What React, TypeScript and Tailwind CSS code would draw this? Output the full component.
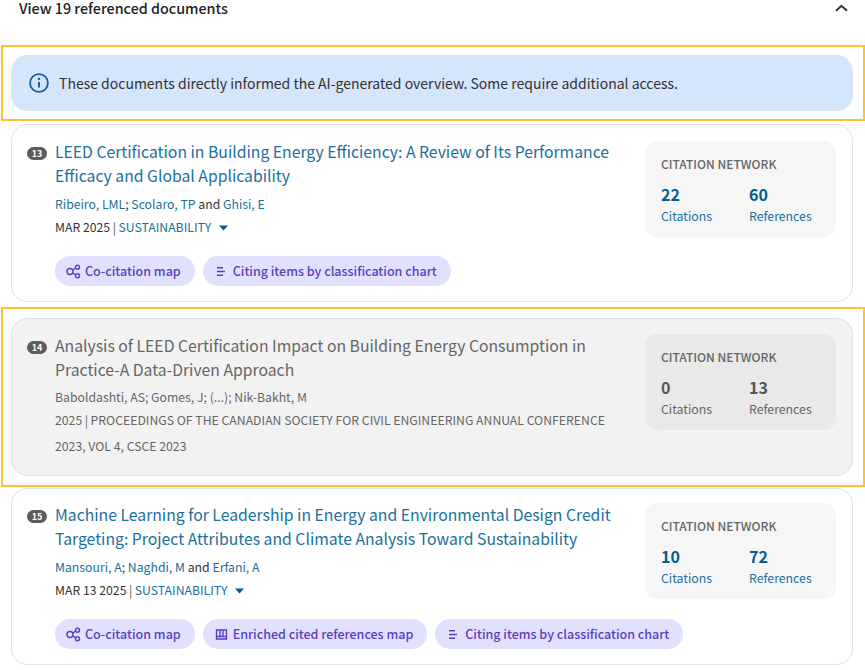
import React from "react";

const font = { fontFamily: '"Noto Sans CJK SC", "Noto Sans", sans-serif' };

function CoIcon() {
  return (
    <svg width="15" height="15" viewBox="0 0 15 15" fill="none" stroke="#5a3fc0" strokeWidth="1.4">
      <circle cx="4" cy="7.5" r="3" />
      <circle cx="11.5" cy="3.2" r="2" />
      <circle cx="11.5" cy="11.8" r="2" />
      <path d="M6.6 6 9.8 4.2M6.6 9 9.8 10.8" />
    </svg>
  );
}
function BarsIcon() {
  return (
    <svg width="15" height="15" viewBox="0 0 15 15" fill="none" stroke="#5a3fc0" strokeWidth="1.6">
      <path d="M3 3.8h6M3 7.5h8M3 11.2h6" />
    </svg>
  );
}
function BookIcon() {
  return (
    <svg width="15" height="15" viewBox="0 0 15 15" fill="none" stroke="#5a3fc0" strokeWidth="1.4">
      <path d="M2.5 3h10v9h-10zM2.5 9.5h10M6 3v6.5M9 3v6.5" />
    </svg>
  );
}

function Chip({ icon, label }: { icon: React.ReactNode; label: string }) {
  return (
    <span className="flex h-[30px] shrink-0 items-center gap-[4px] rounded-full bg-[#e1e1fd] pr-[14px] pl-[11px] text-[12.5px] font-medium whitespace-nowrap text-[#5a3fc0]">
      {icon}
      {label}
    </span>
  );
}

function Stat({ value, label, muted, last }: { value: string; label: string; muted?: boolean; last?: boolean }) {
  return (
    <div className={`flex flex-col ${last ? "" : "w-[88px]"}`}>
      <span className={`text-[16px] leading-[22px] font-bold ${muted ? "text-[#555]" : "text-[#005f8e]"}`}>{value}</span>
      <span className={`mt-px text-[12.3px] leading-[20px] ${muted ? "text-[#666]" : "text-[#1a6f9c]"}`}>{label}</span>
    </div>
  );
}

function Network({ citations, references, muted, className }: { citations: string; references: string; muted?: boolean; className: string }) {
  return (
    <div className={`flex h-[96px] w-[191px] shrink-0 flex-col rounded-[12px] pt-[14px] pl-[16px] ${muted ? "bg-[#e9e9e9]" : "bg-[#f6f6f6]"} ${className}`}>
      <span className="text-[12px] leading-[18px] font-medium text-[#666]">CITATION NETWORK</span>
      <div className="mt-[10px] flex">
        <Stat value={citations} label="Citations" muted={muted} />
        <Stat value={references} label="References" muted={muted} last />
      </div>
    </div>
  );
}

function Badge({ n }: { n: string }) {
  return (
    <span className="mt-[7px] flex h-[13px] w-[20px] shrink-0 items-center justify-center rounded-full bg-[#5c5c5c] text-[9px] leading-none font-bold text-white">
      {n}
    </span>
  );
}

function Caret() {
  return (
    <svg width="9" height="6" viewBox="0 0 9 6" className="ml-[8px] inline-block align-[1px]">
      <path d="M0 0.5h9L4.5 5.5z" fill="#005f8e" />
    </svg>
  );
}

function Link({ children }: { children: React.ReactNode }) {
  return <span className="text-[#1a6f9c]">{children}</span>;
}

function Sep({ muted }: { muted?: boolean }) {
  return <span className={`mx-[2.5px] ${muted ? "text-[#666]" : "text-[#555]"}`}>|</span>;
}

export default function App() {
  return (
    <div className="h-[670px] w-[865px] overflow-hidden bg-white text-[#333]" style={font}>
      <div className="flex h-[45px] items-start justify-between pr-[17px] pl-[19px]">
        <span className="-mt-[4px] text-[14.3px] leading-[24px] font-medium text-[#222]">View 19 referenced documents</span>
        <svg width="13" height="8" viewBox="0 0 13 8" fill="none" stroke="#333" strokeWidth="2" className="mt-[4px]">
          <path d="M1 6.8 6.5 1.8 12 6.8" />
        </svg>
      </div>

      <div className="ml-px h-[76px] w-[864px] border-2 border-[#fdc32d] pt-[8px] pr-[10px] pl-[8px]">
        <div className="flex h-[56px] items-center gap-[10px] rounded-[16px] border border-[#dbe6f5] bg-[#d4e5fc] pl-[17px]">
          <svg width="20" height="20" viewBox="0 0 20 20" fill="none" stroke="#1a5ca6" strokeWidth="1.8">
            <circle cx="10" cy="10" r="8.9" />
            <path d="M10 9v5.5" strokeWidth="2" />
            <circle cx="10" cy="6" r="1.2" fill="#1a5ca6" stroke="none" />
          </svg>
          <span className="text-[14px] leading-[22px] text-[#333]">These documents directly informed the AI-generated overview. Some require additional access.</span>
        </div>
      </div>

      <div className="mt-[3px] ml-[11px] flex h-[178px] w-[842px] justify-between rounded-[16px] border border-[#e3e3e3] pt-[15px] pr-[16px] pl-[15px]">
        <div className="flex min-w-0 flex-1 flex-col">
          <div className="flex gap-[8px]">
            <Badge n="13" />
            <div className="flex flex-col">
              <div className="w-[565px] text-[15.75px] leading-[23.5px] text-[#1a6f9c]">LEED Certification in Building Energy Efficiency: A Review of Its Performance Efficacy and Global Applicability</div>
              <div className="mt-[6px] text-[12.25px] leading-[23px] text-[#333]"><Link>Ribeiro, LML</Link>; <Link>Scolaro, TP</Link> and <Link>Ghisi, E</Link></div>
              <div className="text-[12.25px] leading-[23px] text-[#333]">MAR 2025<Sep /><Link>SUSTAINABILITY</Link><Caret /></div>
            </div>
          </div>
          <div className="mt-[17px] ml-[28px] flex gap-[8px]">
            <Chip icon={<CoIcon />} label="Co-citation map" />
            <Chip icon={<BarsIcon />} label="Citing items by classification chart" />
          </div>
        </div>
        <Network citations="22" references="60" className="mt-px" />
      </div>

      <div className="mt-[5px] ml-px h-[180px] w-[864px] border-2 border-[#fdc32d] pt-[9px] pr-[10px] pl-[8px]">
        <div className="flex h-[158px] justify-between rounded-[16px] border border-[#e3e3e3] bg-[#f2f2f2] pt-[15px] pr-[16px] pl-[15px]">
          <div className="flex min-w-0 flex-1 gap-[8px]">
            <Badge n="14" />
            <div className="flex flex-col text-[#666]">
              <div className="w-[565px] text-[15.75px] leading-[23.5px]">Analysis of LEED Certification Impact on Building Energy Consumption in Practice-A Data-Driven Approach</div>
              <div className="mt-[5px] text-[12.25px] leading-[23px]">Baboldashti, AS; Gomes, J; (...); Nik-Bakht, M</div>
              <div className="-mt-[2px] w-[565px] text-[12.25px] leading-[26px]">2025<Sep muted />PROCEEDINGS OF THE CANADIAN SOCIETY FOR CIVIL ENGINEERING ANNUAL CONFERENCE 2023, VOL 4, CSCE 2023</div>
            </div>
          </div>
          <Network citations="0" references="13" muted className="mt-0" />
        </div>
      </div>

      <div className="mt-px ml-[11px] flex h-[177px] w-[842px] justify-between rounded-[16px] border border-[#e3e3e3] pt-[14px] pr-[16px] pl-[15px]">
        <div className="flex min-w-0 flex-1 flex-col">
          <div className="flex gap-[8px]">
            <Badge n="15" />
            <div className="flex flex-col">
              <div className="w-[565px] text-[15.75px] leading-[23.5px] text-[#1a6f9c]">Machine Learning for Leadership in Energy and Environmental Design Credit Targeting: Project Attributes and Climate Analysis Toward Sustainability</div>
              <div className="mt-[6px] text-[12.25px] leading-[23px] text-[#333]"><Link>Mansouri, A</Link>; <Link>Naghdi, M</Link> and <Link>Erfani, A</Link></div>
              <div className="text-[12.25px] leading-[23px] text-[#333]">MAR 13 2025<Sep /><Link>SUSTAINABILITY</Link><Caret /></div>
            </div>
          </div>
          <div className="mt-[17px] ml-[28px] flex gap-[8px]">
            <Chip icon={<CoIcon />} label="Co-citation map" />
            <Chip icon={<BookIcon />} label="Enriched cited references map" />
            <Chip icon={<BarsIcon />} label="Citing items by classification chart" />
          </div>
        </div>
        <Network citations="10" references="72" className="mt-0" />
      </div>
    </div>
  );
}
